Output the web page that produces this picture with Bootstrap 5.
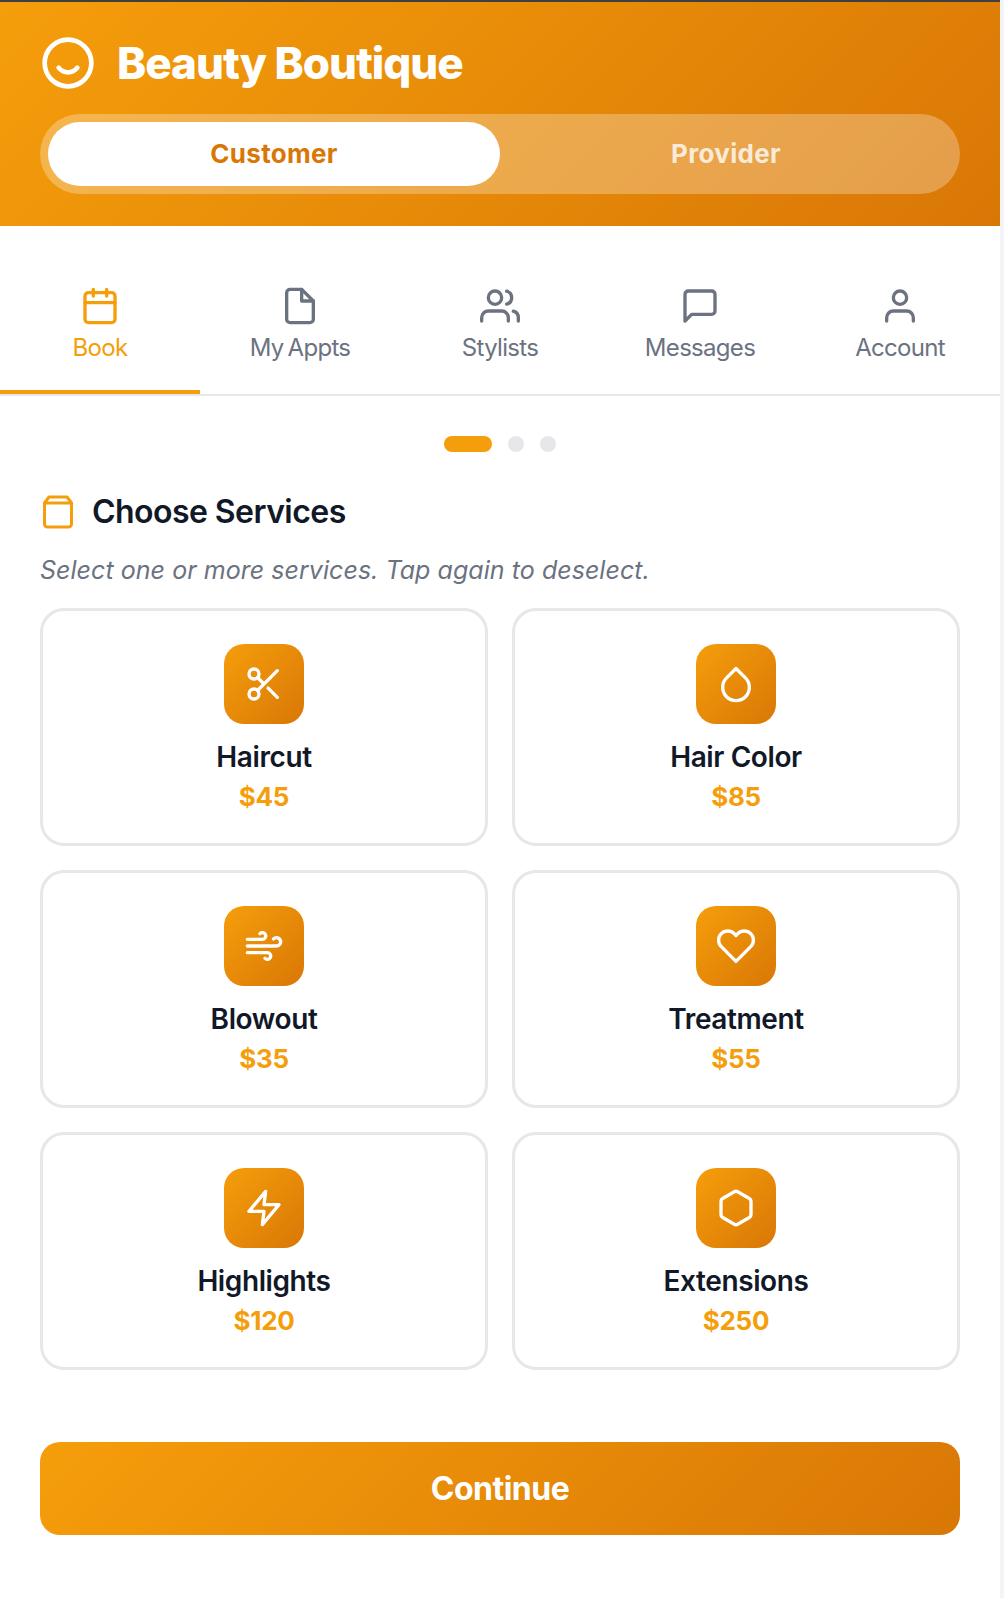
<!DOCTYPE html>
<html lang="en">
  <head>
    <meta charset="UTF-8" />
    <meta name="viewport" content="width=device-width, initial-scale=1" />
    <title>Beauty Boutique</title>
    <link href="https://cdn.jsdelivr.net/npm/bootstrap@5.3.0/dist/css/bootstrap.min.css" rel="stylesheet" />
    <style>
      html, body { height: 100%; }
      body {
        font-family: Inter, "Liberation Sans", sans-serif;
        background: #f3f4f6;
        color: #111827;
      }
      .app-shell {
        width: 1000px;
        min-height: 1598px;
        background: #fff;
        border-top: 2px solid #3f3f3f;
      }
      .app-header {
        height: 224px;
        padding: 33px 40px 0;
        background: linear-gradient(135deg, #f59e0b, #d97706);
      }
      .brand-title { font-size: 44px; font-weight: 800; line-height: 56px; color: #fff; letter-spacing: -1px; }
      .brand-row { gap: 21px; height: 56px; margin-bottom: 23px; }
      .role-switch { height: 80px; padding: 8px; border-radius: 40px; background: rgba(255, 255, 255, 0.28); }
      .role-btn { flex: 1 1 0; border-radius: 32px; font-size: 26px; font-weight: 700; letter-spacing: 0.3px; color: rgba(255, 255, 255, 0.8); line-height: 64px; text-align: center; }
      .role-btn.on { background: #fff; color: #d97706; }
      .tab-bar { height: 170px; border-bottom: 2px solid #e5e7eb; }
      .tab-item { flex: 1 1 0; height: 170px; padding-top: 60px; text-align: center; color: #6b7280; font-size: 24px; line-height: 32px; letter-spacing: -0.7px; word-spacing: -2px; margin-bottom: -2px; }
      .tab-item svg { display: block; margin: 0 auto 6px; }
      .tab-item.on { color: #f59e0b; border-bottom: 4px solid #f59e0b; height: 168px; margin-bottom: 0; }
      .step-dots { gap: 16px; padding-top: 40px; height: 86px; }
      .step-dot { width: 16px; height: 16px; border-radius: 50%; background: #e5e7eb; }
      .step-dot.on { width: 48px; border-radius: 8px; background: #f59e0b; }
      .content-wrap { padding: 0 40px; }
      .section-head { gap: 16px; margin-top: 2px; height: 56px; }
      .section-head h2 { font-size: 32px; font-weight: 600; letter-spacing: -0.55px; margin: 0; color: #111827; }
      .section-head svg { color: #f59e0b; }
      .section-hint { font-size: 25px; font-style: italic; letter-spacing: 0.05px; color: #6b7280; line-height: 36px; margin: 12px 0 20px; }
      .service-box { height: 238px; border: 3px solid #e5e7eb; border-radius: 24px; padding-top: 33px; text-align: center; background: #fff; }
      .service-icon { width: 80px; height: 80px; border-radius: 20px; margin: 0 auto 14px; background: linear-gradient(135deg, #f59e0b, #d97706); }
      .service-name { font-size: 28px; font-weight: 600; line-height: 39px; letter-spacing: -0.4px; color: #111827; }
      .service-price { font-size: 26px; font-weight: 700; line-height: 40px; letter-spacing: -0.3px; color: #f59e0b; }
      .continue-btn {
        display: block; width: 100%; height: 93px; margin-top: 72px;
        border: 0; border-radius: 20px; color: #fff; font-size: 32px; font-weight: 700; letter-spacing: -0.5px;
        background: linear-gradient(135deg, #f59e0b, #d97706);
      }
      .continue-btn:hover { color: #fff; }
      .ico { fill: none; stroke: currentColor; stroke-width: 2; stroke-linecap: round; stroke-linejoin: round; }
      .ico-w { fill: none; stroke: #fff; stroke-width: 2; stroke-linecap: round; stroke-linejoin: round; }
    </style>
  </head>

  <body>
    <div class="app-shell">
      <!-- Header -->
      <header class="app-header">
        <div class="d-flex align-items-center brand-row">
          <svg class="ico-w" width="56" height="56" viewBox="0 0 24 24">
            <circle cx="12" cy="12" r="10" />
            <path d="M8 14s1.5 2 4 2 4-2 4-2" />
          </svg>
          <div class="brand-title">Beauty Boutique</div>
        </div>
        <div class="d-flex role-switch">
          <div class="role-btn on">Customer</div>
          <div class="role-btn">Provider</div>
        </div>
      </header>

      <!-- Tabs -->
      <nav class="d-flex tab-bar">
        <div class="tab-item on">
          <svg class="ico" width="40" height="40" viewBox="0 0 24 24"><rect x="3" y="4" width="18" height="18" rx="2" /><path d="M16 2v4M8 2v4M3 10h18" /></svg>
          Book
        </div>
        <div class="tab-item">
          <svg class="ico" width="40" height="40" viewBox="0 0 24 24"><path d="M13 2H6a2 2 0 0 0-2 2v16a2 2 0 0 0 2 2h12a2 2 0 0 0 2-2V9z" /><path d="M13 2v7h7" /></svg>
          My Appts
        </div>
        <div class="tab-item">
          <svg class="ico" width="40" height="40" viewBox="0 0 24 24"><path d="M17 21v-2a4 4 0 0 0-4-4H5a4 4 0 0 0-4 4v2" /><circle cx="9" cy="7" r="4" /><path d="M23 21v-2a4 4 0 0 0-3-3.87M16 3.13a4 4 0 0 1 0 7.75" /></svg>
          Stylists
        </div>
        <div class="tab-item">
          <svg class="ico" width="40" height="40" viewBox="0 0 24 24"><path d="M21 15a2 2 0 0 1-2 2H7l-4 4V5a2 2 0 0 1 2-2h14a2 2 0 0 1 2 2z" /></svg>
          Messages
        </div>
        <div class="tab-item">
          <svg class="ico" width="40" height="40" viewBox="0 0 24 24"><path d="M20 21v-2a4 4 0 0 0-4-4H8a4 4 0 0 0-4 4v2" /><circle cx="12" cy="7" r="4" /></svg>
          Account
        </div>
      </nav>

      <div class="d-flex justify-content-center step-dots">
        <div class="step-dot on"></div>
        <div class="step-dot"></div>
        <div class="step-dot"></div>
      </div>

      <main class="content-wrap">
        <div class="d-flex align-items-center section-head">
          <svg class="ico" width="36" height="36" viewBox="0 0 24 24"><path d="M6 2L3 6v14a2 2 0 0 0 2 2h14a2 2 0 0 0 2-2V6l-3-4z" /><path d="M3 6h18" /></svg>
          <h2>Choose Services</h2>
        </div>
        <p class="section-hint">Select one or more services. Tap again to deselect.</p>

        <div class="row g-4">
          <div class="col-6">
            <div class="service-box">
              <div class="service-icon d-flex align-items-center justify-content-center">
                <svg class="ico-w" width="40" height="40" viewBox="0 0 24 24"><circle cx="6" cy="6" r="3" /><circle cx="6" cy="18" r="3" /><path d="M20 4L8.12 15.88M14.47 14.48L20 20M8.12 8.12L12 12" /></svg>
              </div>
              <div class="service-name">Haircut</div>
              <div class="service-price">$45</div>
            </div>
          </div>
          <div class="col-6">
            <div class="service-box">
              <div class="service-icon d-flex align-items-center justify-content-center">
                <svg class="ico-w" width="40" height="40" viewBox="0 0 24 24"><path d="M12 2.69l5.66 5.66a8 8 0 1 1-11.31 0z" /></svg>
              </div>
              <div class="service-name">Hair Color</div>
              <div class="service-price">$85</div>
            </div>
          </div>
          <div class="col-6">
            <div class="service-box">
              <div class="service-icon d-flex align-items-center justify-content-center">
                <svg class="ico-w" width="40" height="40" viewBox="0 0 24 24"><path d="M9.59 4.59A2 2 0 1 1 11 8H2m10.59 11.41A2 2 0 1 0 14 16H2m15.73-8.27A2.5 2.5 0 1 1 19.5 12H2" /></svg>
              </div>
              <div class="service-name">Blowout</div>
              <div class="service-price">$35</div>
            </div>
          </div>
          <div class="col-6">
            <div class="service-box">
              <div class="service-icon d-flex align-items-center justify-content-center">
                <svg class="ico-w" width="40" height="40" viewBox="0 0 24 24"><path d="M20.84 4.61a5.5 5.5 0 0 0-7.78 0L12 5.67l-1.06-1.06a5.5 5.5 0 0 0-7.78 7.78l1.06 1.06L12 21.23l7.78-7.78 1.06-1.06a5.5 5.5 0 0 0 0-7.78z" /></svg>
              </div>
              <div class="service-name">Treatment</div>
              <div class="service-price">$55</div>
            </div>
          </div>
          <div class="col-6">
            <div class="service-box">
              <div class="service-icon d-flex align-items-center justify-content-center">
                <svg class="ico-w" width="40" height="40" viewBox="0 0 24 24"><path d="M13 2L3 14h9l-1 8 10-12h-9l1-8z" /></svg>
              </div>
              <div class="service-name">Highlights</div>
              <div class="service-price">$120</div>
            </div>
          </div>
          <div class="col-6">
            <div class="service-box">
              <div class="service-icon d-flex align-items-center justify-content-center">
                <svg class="ico-w" width="40" height="40" viewBox="0 0 24 24"><path d="M21 16V8a2 2 0 0 0-1-1.73l-7-4a2 2 0 0 0-2 0l-7 4A2 2 0 0 0 3 8v8a2 2 0 0 0 1 1.73l7 4a2 2 0 0 0 2 0l7-4A2 2 0 0 0 21 16z" /></svg>
              </div>
              <div class="service-name">Extensions</div>
              <div class="service-price">$250</div>
            </div>
          </div>
        </div>

        <button type="button" class="btn continue-btn">Continue</button>
      </main>
    </div>

    <script src="https://cdn.jsdelivr.net/npm/bootstrap@5.3.0/dist/js/bootstrap.bundle.min.js"></script>
  </body>
</html>
